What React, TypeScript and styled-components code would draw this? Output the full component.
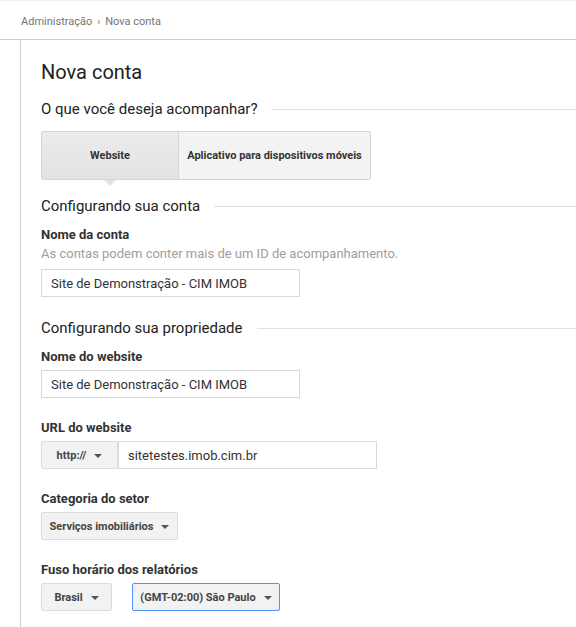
import React from "react";
import styled, { createGlobalStyle } from "styled-components";

const GlobalStyle = createGlobalStyle`
  html, body { margin: 0; padding: 0; background: #fff; }
  body { font-family: Roboto, "Liberation Sans", Arial, sans-serif; color: #333; }
  * { box-sizing: border-box; }
`;

const Page = styled.div`
  width: 576px;
  min-height: 627px;
  display: flex;
  flex-direction: column;
  border-top: 1px solid #f0f0f0;
`;

const TopBar = styled.div`
  height: 39px;
  border-bottom: 1px solid #cfcfcf;
  display: flex;
  align-items: center;
  padding: 3px 0 0 21px;
  font-size: 11px;
  color: #757575;
`;

const Sep = styled.span`
  margin: 0 5px;
  font-size: 10px;
`;

const Body = styled.div`
  flex: 1;
  margin-left: 20px;
  border-left: 1px solid #cfcfcf;
  padding: 20px 0 20px 20px;
  display: flex;
  flex-direction: column;
`;

const Title = styled.h1`
  margin: 0;
  font-size: 20px;
  line-height: 24px;
  font-weight: 400;
  color: #222;
`;

const SectionHead = styled.div<{ $top: number; $bottom: number }>`
  display: flex;
  align-items: center;
  margin-top: ${(p) => p.$top}px;
  margin-bottom: ${(p) => p.$bottom}px;
  font-size: 15px;
  line-height: 20px;
  color: #222;
  &::after {
    content: "";
    flex: 1;
    height: 1px;
    background: #e0e0e0;
    margin-left: 14px;
  }
`;

const Tabs = styled.div`
  display: flex;
  width: 330px;
  height: 49px;
  border: 1px solid #d6d6d6;
  border-radius: 2px;
`;

const Tab = styled.div<{ $active?: boolean; $width: number }>`
  position: relative;
  width: ${(p) => p.$width}px;
  display: flex;
  align-items: center;
  justify-content: center;
  font-size: 11px;
  font-weight: 700;
  color: #333;
  background: ${(p) => (p.$active ? "linear-gradient(#ececec, #e2e2e2)" : "#f3f3f3")};
  border-right: ${(p) => (p.$active ? "1px solid #d6d6d6" : "none")};
  ${(p) =>
    p.$active &&
    `
    &::after {
      content: "";
      position: absolute;
      left: 50%;
      bottom: -7px;
      margin-left: -6px;
      border-left: 6px solid transparent;
      border-right: 6px solid transparent;
      border-top: 6px solid #e2e2e2;
    }
  `}
`;

const Field = styled.div<{ $top?: number }>`
  display: flex;
  flex-direction: column;
  margin-top: ${(p) => p.$top ?? 21}px;
`;

const Label = styled.div`
  font-size: 13px;
  line-height: 18px;
  font-weight: 700;
  color: #333;
  margin-bottom: 4px;
`;

const Hint = styled.div`
  font-size: 13px;
  line-height: 18px;
  color: #9e9e9e;
  margin-top: -3px;
  margin-bottom: 6px;
`;

const TextInput = styled.div<{ $width: number }>`
  width: ${(p) => p.$width}px;
  height: 28px;
  border: 1px solid #d9d9d9;
  display: flex;
  align-items: center;
  padding-left: 9px;
  font-size: 13px;
  color: #333;
  background: #fff;
`;

const Row = styled.div<{ $gap?: number }>`
  display: flex;
  gap: ${(p) => p.$gap ?? 0}px;
`;

const SelectButton = styled.div<{ $width?: number; $focused?: boolean }>`
  ${(p) => (p.$width ? `width: ${p.$width}px;` : "")}
  height: 28px;
  display: flex;
  align-items: center;
  justify-content: center;
  gap: 8px;
  padding: 0 4px;
  font-size: 11px;
  font-weight: 700;
  color: #444;
  background: #f2f2f2;
  border: 1px solid ${(p) => (p.$focused ? "#4d90fe" : "#dcdcdc")};
  border-radius: 2px;
`;

const Caret = styled.span`
  width: 0;
  height: 0;
  border-left: 4px solid transparent;
  border-right: 4px solid transparent;
  border-top: 4px solid #555;
  margin-top: 1px;
`;

const Select = ({ children, width, focused }: { children: React.ReactNode; width?: number; focused?: boolean }) => (
  <SelectButton $width={width} $focused={focused}>
    <span>{children}</span>
    <Caret />
  </SelectButton>
);

export default function App() {
  return (
    <>
      <GlobalStyle />
      <Page>
        <TopBar>
          Administração<Sep>›</Sep>Nova conta
        </TopBar>
        <Body>
          <Title>Nova conta</Title>
          <SectionHead $top={15} $bottom={12}>O que você deseja acompanhar?</SectionHead>
          <Tabs>
            <Tab $active $width={137}>Website</Tab>
            <Tab $width={191}>Aplicativo para dispositivos móveis</Tab>
          </Tabs>
          <SectionHead $top={16} $bottom={0}>Configurando sua conta</SectionHead>
          <Field $top={10}>
            <Label>Nome da conta</Label>
            <Hint>As contas podem conter mais de um ID de acompanhamento.</Hint>
            <TextInput $width={259}>Site de Demonstração - CIM IMOB</TextInput>
          </Field>
          <SectionHead $top={21} $bottom={0}>Configurando sua propriedade</SectionHead>
          <Field $top={10}>
            <Label>Nome do website</Label>
            <TextInput $width={259}>Site de Demonstração - CIM IMOB</TextInput>
          </Field>
          <Field>
            <Label>URL do website</Label>
            <Row>
              <Select width={77}>http://</Select>
              <TextInput $width={259}>sitetestes.imob.cim.br</TextInput>
            </Row>
          </Field>
          <Field>
            <Label>Categoria do setor</Label>
            <Row>
              <Select width={137}>Serviços imobiliários</Select>
            </Row>
          </Field>
          <Field>
            <Label>Fuso horário dos relatórios</Label>
            <Row $gap={20}>
              <Select width={71}>Brasil</Select>
              <Select width={148} focused>(GMT-02:00) São Paulo</Select>
            </Row>
          </Field>
        </Body>
      </Page>
    </>
  );
}
